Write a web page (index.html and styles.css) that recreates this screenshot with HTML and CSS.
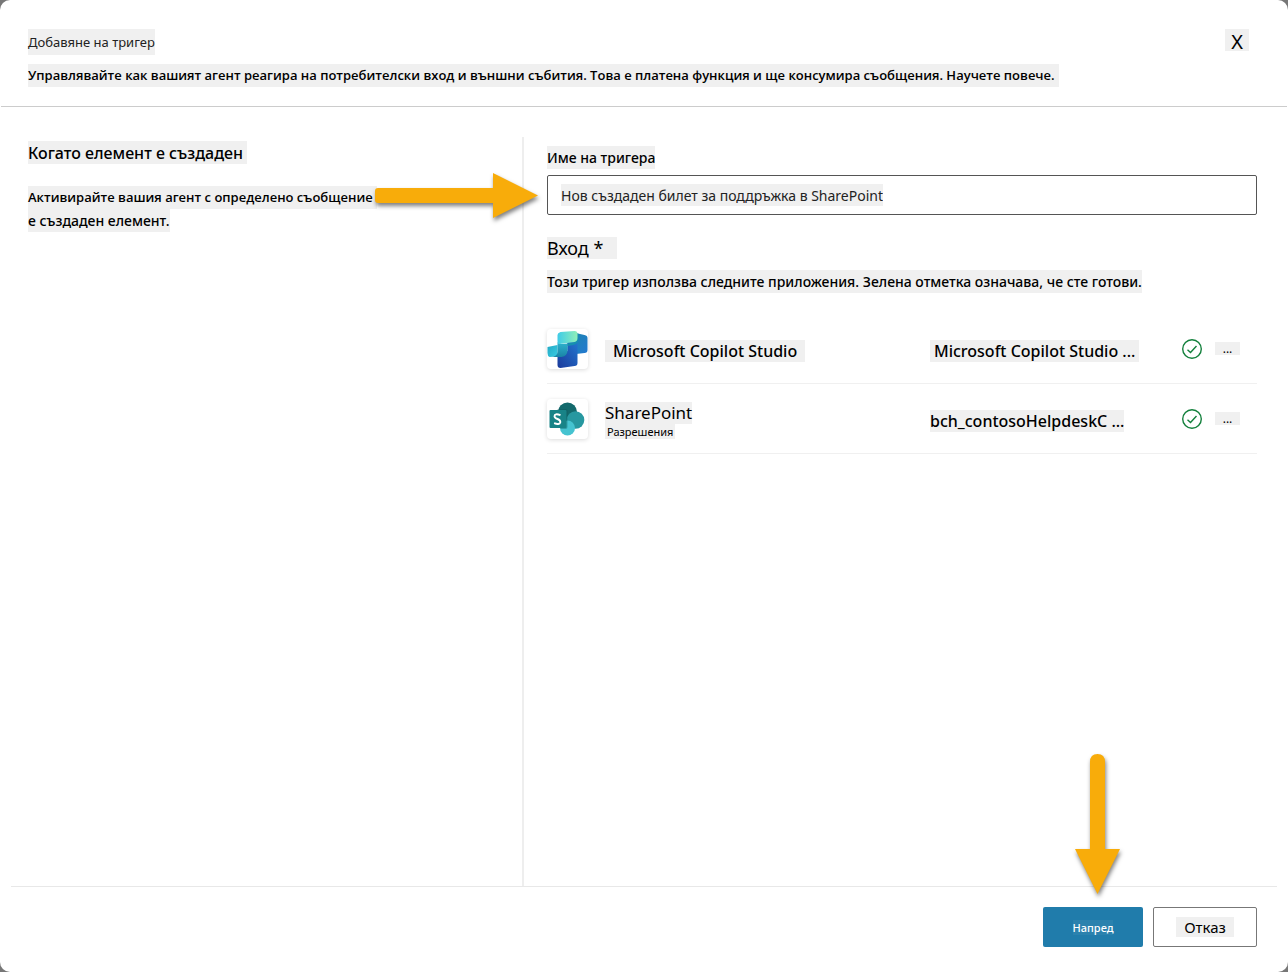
FILE: index.html
```html
<!DOCTYPE html>
<html lang="bg">
<head>
<meta charset="utf-8">
<title>Добавяне на тригер</title>
<link rel="stylesheet" href="styles.css">
</head>
<body>
<main class="dialog">
  <header class="header">
    <div class="heading">
      <h1 class="title mark">Добавяне на тригер</h1>
      <p class="text compact mark">Управлявайте как вашият агент реагира на потребителски вход и външни събития. Това е платена функция и ще консумира съобщения. Научете повече.</p>
    </div>
    <button class="close mark" type="button">X</button>
  </header>

  <div class="content">
    <section class="summary">
      <h2 class="subtitle mark">Когато елемент е създаден</h2>
      <p class="lines"><span class="text compact mark">Активирайте вашия агент с определено съобщение</span> <span class="text mark">е създаден елемент.</span></p>
    </section>

    <section class="settings">
      <label class="text mark" for="trigger-name">Име на тригера</label>
      <div class="field">
        <input class="value mark" id="trigger-name" type="text" value="Нов създаден билет за поддръжка в SharePoint">
        <svg class="arrow arrow-right" width="172" height="56" viewBox="0 0 172 56" aria-hidden="true">
          <path d="M4 16H119V1L164 23.500L119 46V31H4Q1 31 1 28V19Q1 16 4 16Z"/>
        </svg>
      </div>
      <h2 class="signin mark">Вход *</h2>
      <p class="text mark">Този тригер използва следните приложения. Зелена отметка означава, че сте готови.</p>

      <ul class="apps">
        <li class="app">
          <svg class="logo" viewBox="0 0 40 40" aria-hidden="true">
            <defs>
              <linearGradient id="mint" x1="0" y1="0" x2="1" y2="0"><stop offset="0" stop-color="#3fcbe8"/><stop offset="1" stop-color="#90efb8"/></linearGradient>
              <linearGradient id="cyan" x1="0" y1="0" x2="1" y2="1"><stop offset="0" stop-color="#22a9c4"/><stop offset="1" stop-color="#3bcbe3"/></linearGradient>
              <linearGradient id="fold" x1="0" y1="0" x2="0" y2="1"><stop offset="0" stop-color="#2fb5cf"/><stop offset="1" stop-color="#1a83a6"/></linearGradient>
              <linearGradient id="blue" x1="0" y1="1" x2="1" y2="0"><stop offset="0" stop-color="#1b3a9b"/><stop offset="1" stop-color="#2376cf"/></linearGradient>
              <linearGradient id="side" x1="0" y1="0" x2="1" y2="1"><stop offset="0" stop-color="#1c86aa"/><stop offset="1" stop-color="#2378d2"/></linearGradient>
            </defs>
            <path fill="url(#side)" d="M28 4L37 6Q40 6.500 40 9V21Q40 24 37 24L20 26V13Z"/>
            <path fill="url(#blue)" d="M20 13L30 12V34Q30 37 27 37L13 39Q10 39 10 36V27L20 22Z"/>
            <path fill="url(#cyan)" d="M0 18L10 16V25Q10 27 7 27.500L2 28Q0 27 0 24Z"/>
            <path fill="url(#fold)" d="M10 13Q11 15 14 15L20 14.500V21Q20 27 14 28L2 28Q10 28 10 23Z"/>
            <path fill="#168fb0" d="M20 14.500L27 13Q30 12 30 9V4L31 5V10Q31 15 26 16L20 17Z"/>
            <path fill="url(#mint)" d="M13 3L27 2Q30 2 30 5V9Q30 12 27 13L12 15Q10 15 10 12V6Q10 4 13 3Z"/>
          </svg>
          <div class="name"><span class="label label-wide mark">Microsoft Copilot Studio</span></div>
          <div class="account"><span class="label label-account mark">Microsoft Copilot Studio ...</span></div>
          <svg class="check" viewBox="0 0 20 20" role="img" aria-label="Готово"><circle cx="10" cy="10" r="9.300"/><path d="M5.500 10.800L8.500 13.500L14.500 7"/></svg>
          <button class="more mark" type="button">...</button>
        </li>
        <li class="app">
          <svg class="logo" viewBox="0 0 40 40" aria-hidden="true">
            <circle cx="20" cy="13" r="9.500" fill="#13696c"/>
            <circle cx="28" cy="21" r="8.800" fill="#2798a0"/>
            <circle cx="20" cy="29" r="7.500" fill="#45c3d0"/>
            <path fill="#0b5459" opacity=".35" d="M10 10H18Q20 10 20 12V28Q20 30 18 30H13Z"/>
            <rect x="2" y="11" width="17" height="18" rx="1" fill="#188387"/>
            <path fill="none" stroke="#fff" stroke-width="1.900" d="M13 16.200Q7.200 14 7 17.200Q7 18.800 10 20Q13 21.200 12.800 23.200Q12 26.200 6.600 24.200"/>
          </svg>
          <div class="name"><span class="label label-light mark">SharePoint</span><span class="note mark">Разрешения</span></div>
          <div class="account"><span class="label mark">bch_contosoHelpdeskC ...</span></div>
          <svg class="check" viewBox="0 0 20 20" role="img" aria-label="Готово"><circle cx="10" cy="10" r="9.300"/><path d="M5.500 10.800L8.500 13.500L14.500 7"/></svg>
          <button class="more mark" type="button">...</button>
        </li>
      </ul>
    </section>
  </div>

  <footer class="footer">
    <button class="button primary" type="button"><span class="mark">Напред</span>
      <svg class="arrow arrow-down" width="56" height="154" viewBox="0 0 56 154" aria-hidden="true">
        <path d="M16 9Q16 1 23.500 1Q31 1 31 9V96H46L23.500 141L1 96H16Z"/>
      </svg>
    </button>
    <button class="button secondary" type="button"><span class="mark">Отказ</span></button>
  </footer>
</main>
</body>
</html>
```
FILE: styles.css
```css
* { box-sizing: border-box; }

body {
  margin: 0;
  background: #777;
  color: #000;
  font-family: "Noto Sans", sans-serif;
  font-size: 14px;
  font-weight: 500;
}

h1, h2, p, ul { margin: 0; padding: 0; }

button, input { font: inherit; color: inherit; border: 0; padding: 0; }

.dialog {
  display: flex;
  flex-direction: column;
  min-height: 100vh;
  background: #fff;
  border-radius: 10px;
}

.mark { background: #f0f0f0; }

.text { font-size: 14px; line-height: 23px; }

.compact {
  padding-right: 4px;
  font-family: "Open Sans", "Noto Sans", sans-serif;
  font-size: 13px;
  font-weight: 600;
}

.header {
  display: flex;
  justify-content: space-between;
  align-items: flex-start;
  margin: 0 1px;
  padding: 29px 38px 19px 27px;
  border-bottom: 1px solid #ccc;
}

.heading {
  display: flex;
  flex-direction: column;
  align-items: flex-start;
  gap: 9px;
}

.title {
  color: #222;
  font-size: 13px;
  font-weight: 400;
  line-height: 26px;
}

.close {
  width: 24px;
  height: 22px;
  padding-top: 4px;
  font-size: 20px;
  font-weight: 400;
  line-height: 18px;
}

.content {
  display: grid;
  flex: 1;
  grid-template-columns: 494px 1fr;
  padding: 30px 31px 0 28px;
}

.summary {
  display: flex;
  flex-direction: column;
  align-items: flex-start;
  gap: 22px;
  padding-top: 4px;
}

.subtitle {
  padding: 1px 4px 0 0;
  font-size: 16px;
  font-weight: 500;
  line-height: 22px;
}

.lines {
  display: flex;
  flex-direction: column;
  align-items: flex-start;
}

.settings {
  display: flex;
  flex-direction: column;
  align-items: flex-start;
  padding: 9px 0 0 23px;
  border-left: 2px solid #eee;
}

.field {
  position: relative;
  display: flex;
  align-items: center;
  width: 100%;
  height: 40px;
  margin-top: 6px;
  padding: 0 13px;
  border: 1px solid #555;
  border-radius: 2px;
}

.value {
  field-sizing: content;
  height: 22px;
  color: #222;
  font-weight: 400;
}

.arrow {
  position: absolute;
  fill: #f8ac0a;
  filter: drop-shadow(1px 3px 2px rgb(0 0 0 / 50%));
  pointer-events: none;
}

.arrow-right { right: 100%; top: -4px; margin-right: 2px; }

.signin {
  margin: 22px 0 11px;
  padding-right: 14px;
  font-size: 18px;
  font-weight: 400;
  line-height: 22px;
}

.apps { width: 100%; margin-top: 21px; list-style: none; }

.app {
  display: grid;
  grid-template-columns: 41px 1fr 252px 33px 25px;
  align-items: center;
  height: 70px;
  padding-right: 17px;
  border-bottom: 1px solid #f0f0f0;
}

.logo {
  width: 41px;
  height: 40px;
  border-radius: 4px;
  background: #fff;
  box-shadow: 0 1px 4px rgb(0 0 0 / 14%);
}

.name {
  display: flex;
  flex-direction: column;
  align-items: flex-start;
  padding: 4px 0 0 17px;
}

.account { padding-top: 4px; }

.label { display: inline-block; font-size: 16px; line-height: 22px; }

.label-light { font-size: 17px; font-weight: 400; }

.label-wide { padding: 0 8px; }

.label-account { padding: 0 4px; }

.note { padding: 0 2px; font-size: 11px; font-weight: 400; line-height: 15px; }

.check {
  width: 20px;
  height: 20px;
  fill: none;
  stroke: #13803c;
  stroke-width: 1.4;
}

.more {
  height: 13px;
  font-size: 12px;
  font-weight: 400;
  line-height: 13px;
}

.footer {
  display: flex;
  justify-content: flex-end;
  gap: 10px;
  margin: 0 11px;
  padding: 20px 20px 25px;
  border-top: 1px solid #e8e8e8;
}

.button {
  position: relative;
  height: 40px;
  border-radius: 2px;
}

.primary { width: 100px; background: #207cab; color: #fff; font-size: 11px; }

.primary .mark { background: #2b82ae; }

.secondary { width: 104px; border: 1px solid #777; background: #fff; font-size: 15px; font-weight: 400; }

.secondary .mark { padding: 0 8px; }

.arrow-down { left: 31px; bottom: 100%; }
```
